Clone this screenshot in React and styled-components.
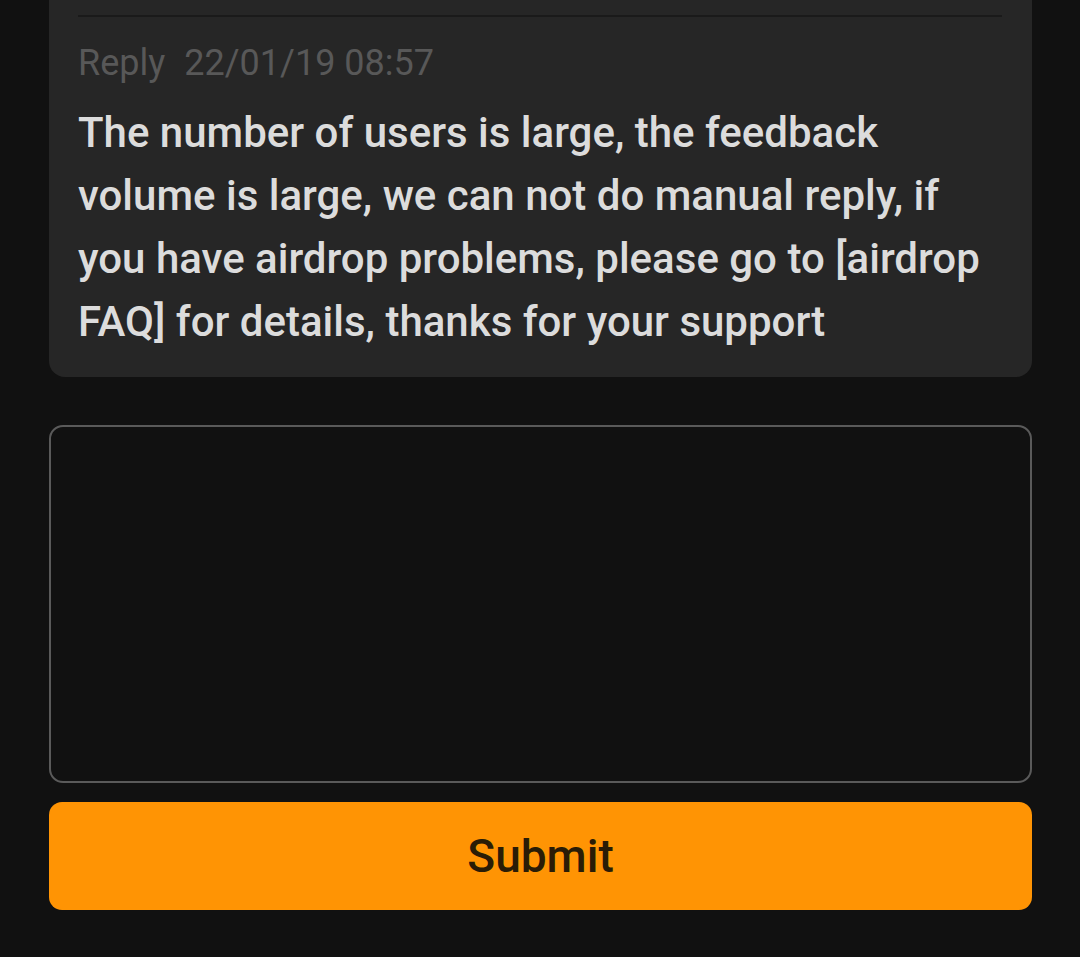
import styled, { createGlobalStyle } from "styled-components";

const GlobalStyle = createGlobalStyle`
  html, body {
    margin: 0;
    padding: 0;
    background: #111111;
  }
  body {
    font-family: Roboto, "Noto Sans", "Liberation Sans", sans-serif;
  }
`;

const Page = styled.div`
  width: 1080px;
  height: 957px;
  box-sizing: border-box;
  padding: 0 48px 0 49px;
  background: #111111;
  display: flex;
  flex-direction: column;
  overflow: hidden;
`;

const ReplyCard = styled.div`
  background: #262626;
  border-radius: 0 0 16px 16px;
  padding: 15px 30px 24px 29px;
`;

const Divider = styled.div`
  height: 2px;
  background: #1a1a1a;
`;

const ReplyMeta = styled.div`
  margin-top: 22px;
  font-size: 36px;
  line-height: 48px;
  color: #585858;
  display: flex;
  gap: 19px;
`;

const ReplyText = styled.p`
  margin: 14px 0 0;
  font-size: 42px;
  font-weight: 500;
  line-height: 63px;
  color: #dcdcdc;
`;

const Feedback = styled.textarea`
  margin-top: 48px;
  height: 358px;
  box-sizing: border-box;
  background: #111111;
  border: 2px solid #5a5a5a;
  border-radius: 14px;
  resize: none;
  outline: none;
  color: #dcdcdc;
  font-family: inherit;
  font-size: 36px;
  padding: 20px 28px;
`;

const SubmitButton = styled.button`
  margin-top: 19px;
  height: 108px;
  border: none;
  border-radius: 13px;
  background: #ff9404;
  color: #2a1c06;
  font-family: inherit;
  font-size: 46px;
  font-weight: 500;
  cursor: pointer;
`;

export default function App() {
  return (
    <>
      <GlobalStyle />
      <Page>
        <ReplyCard>
          <Divider />
          <ReplyMeta>
            <span>Reply</span>
            <span>22/01/19 08:57</span>
          </ReplyMeta>
          <ReplyText>
            The number of users is large, the feedback volume is large, we can
            not do manual reply, if you have airdrop problems, please go to
            [airdrop FAQ] for details, thanks for your support
          </ReplyText>
        </ReplyCard>
        <Feedback />
        <SubmitButton>Submit</SubmitButton>
      </Page>
    </>
  );
}
